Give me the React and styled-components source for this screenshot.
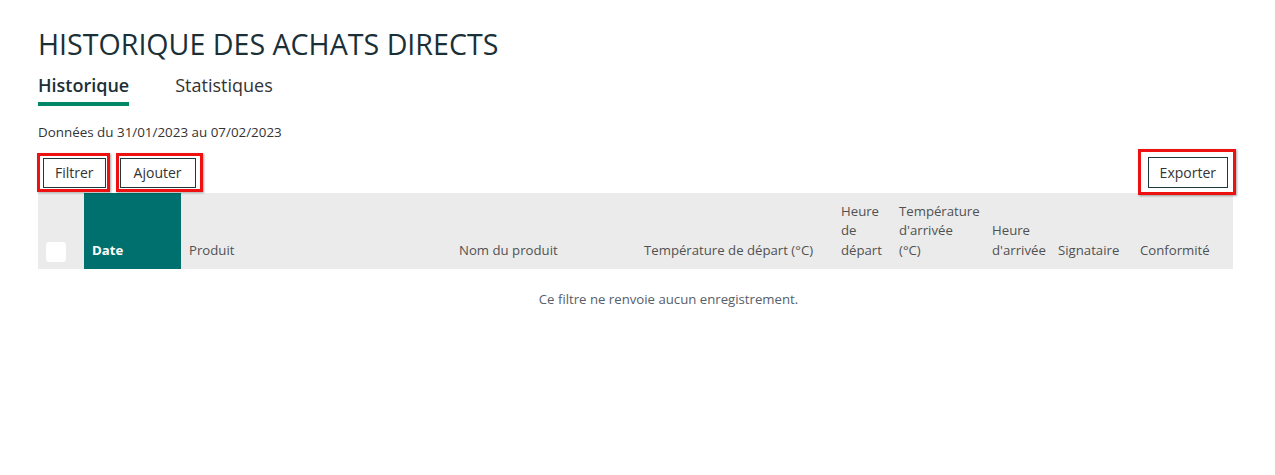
import React from 'react';
import styled, { createGlobalStyle } from 'styled-components';

const GlobalStyle = createGlobalStyle`
  body {
    margin: 0;
    background: #ffffff;
    font-family: "Open Sans", "Noto Sans", sans-serif;
    color: #333333;
  }
`;

const Page = styled.div`
  padding: 26px 42px 0 38px;
`;

const Title = styled.h1`
  margin: 0;
  font-size: 28.6px;
  line-height: 36px;
  font-weight: 500;
  color: #1b2f37;
`;

const TabBar = styled.div`
  display: flex;
  gap: 46px;
  margin-top: 10px;
`;

const Tab = styled.div`
  font-size: 18px;
  line-height: 27px;
  padding-bottom: 3px;
  font-weight: ${(p) => (p.$active ? 600 : 400)};
  color: ${(p) => (p.$active ? '#1b2f37' : '#333333')};
  border-bottom: 4px solid ${(p) => (p.$active ? '#008767' : 'transparent')};
`;

const Period = styled.div`
  margin-top: 17px;
  font-size: 13.4px;
  line-height: 18px;
  color: #333333;
`;

const Toolbar = styled.div`
  display: flex;
  justify-content: space-between;
  align-items: center;
  margin-top: 11px;
  padding: 5px 5px;
`;

const ButtonGroup = styled.div`
  display: flex;
  gap: 14px;
`;

const Highlight = styled.div`
  position: relative;
  display: flex;

  &::after {
    content: '';
    position: absolute;
    top: ${(p) => -p.$t}px;
    right: ${(p) => -p.$r}px;
    bottom: ${(p) => -p.$b}px;
    left: ${(p) => -p.$l}px;
    border: 3px solid #ee1111;
    box-shadow: 1px 1px 2px rgba(0, 0, 0, 0.35);
    pointer-events: none;
    z-index: 2;
  }
`;

const Button = styled.button`
  height: ${(p) => p.$h || 30}px;
  padding: 0 ${(p) => p.$px || 11}px;
  border: 1px solid #1f3a3d;
  background: #ffffff;
  font-family: "Open Sans", "Noto Sans", sans-serif;
  font-size: 14px;
  color: #333333;
  cursor: pointer;
`;

const Table = styled.table`
  width: 100%;
  border-collapse: collapse;
  table-layout: fixed;
`;

const HeadRow = styled.tr`
  background: #ebebeb;
  height: 76px;
`;

const Th = styled.th`
  vertical-align: bottom;
  text-align: left;
  padding: 0 8px 9px;
  font-size: 13.2px;
  line-height: 19.5px;
  font-weight: ${(p) => (p.$sorted ? 700 : 400)};
  color: ${(p) => (p.$sorted ? '#ffffff' : '#515151')};
  background: ${(p) => (p.$sorted ? '#00706e' : 'transparent')};
  white-space: nowrap;
`;

const CheckCell = styled.th`
  vertical-align: bottom;
  padding: 0 8px 7px;
`;

const CheckBox = styled.span`
  display: block;
  width: 20px;
  height: 20px;
  border-radius: 3px;
  background: #ffffff;
`;

const EmptyCell = styled.td`
  padding: 20px 0 0 66px;
  text-align: center;
  font-size: 13.2px;
  line-height: 20px;
  color: #56606a;
`;

const columns = [
  { key: 'date', width: 97, label: 'Date', sorted: true },
  { key: 'produit', width: 270, label: 'Produit' },
  { key: 'nom', width: 185, label: 'Nom du produit' },
  { key: 'tempDep', width: 197, label: 'Température de départ (°C)' },
  { key: 'heureDep', width: 58, label: ['Heure', 'de', 'départ'] },
  { key: 'tempArr', width: 93, label: ['Température', "d'arrivée", '(°C)'] },
  { key: 'heureArr', width: 66, label: ['Heure', "d'arrivée"] },
  { key: 'signataire', width: 82, label: 'Signataire' },
  { key: 'conformite', width: 101, label: 'Conformité' },
];

const renderLabel = (label) =>
  Array.isArray(label)
    ? label.map((line, i) => (
        <React.Fragment key={line}>
          {i > 0 && <br />}
          {line}
        </React.Fragment>
      ))
    : label;

const App = () => {
  return (
    <>
      <GlobalStyle />
      <Page>
        <Title>HISTORIQUE DES ACHATS DIRECTS</Title>
        <TabBar>
          <Tab $active>Historique</Tab>
          <Tab>Statistiques</Tab>
        </TabBar>
        <Period>Données du 31/01/2023 au 07/02/2023</Period>
        <Toolbar>
          <ButtonGroup>
            <Highlight $t={5} $r={4} $b={4} $l={6}>
              <Button>Filtrer</Button>
            </Highlight>
            <Highlight $t={5} $r={7} $b={4} $l={4}>
              <Button $px={13}>Ajouter</Button>
            </Highlight>
          </ButtonGroup>
          <Highlight $t={8} $r={8} $b={7} $l={10}>
            <Button $h={31}>Exporter</Button>
          </Highlight>
        </Toolbar>
        <Table>
          <colgroup>
            <col style={{ width: 46 }} />
            {columns.map((c) => (
              <col key={c.key} style={{ width: c.width }} />
            ))}
          </colgroup>
          <thead>
            <HeadRow>
              <CheckCell>
                <CheckBox />
              </CheckCell>
              {columns.map((c) => (
                <Th key={c.key} $sorted={c.sorted}>
                  {renderLabel(c.label)}
                </Th>
              ))}
            </HeadRow>
          </thead>
          <tbody>
            <tr>
              <EmptyCell colSpan={columns.length + 1}>
                Ce filtre ne renvoie aucun enregistrement.
              </EmptyCell>
            </tr>
          </tbody>
        </Table>
      </Page>
    </>
  );
};

export default App;
